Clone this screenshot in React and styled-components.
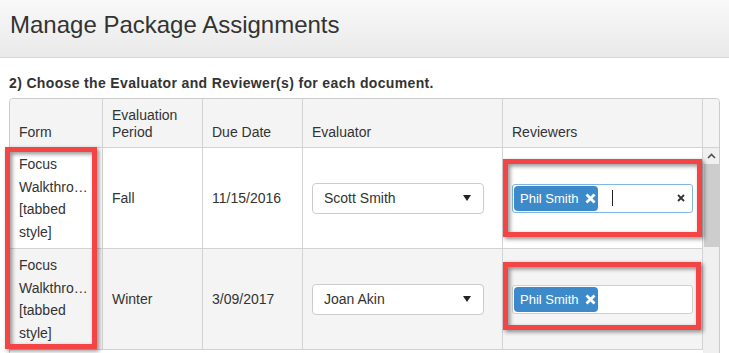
import React from 'react';
import styled, { createGlobalStyle } from 'styled-components';

const GlobalStyle = createGlobalStyle`
  * {
    box-sizing: border-box;
  }
  body {
    margin: 0;
    background: #fff;
    color: #333;
    font-family: "Liberation Sans", Arial, sans-serif;
    font-size: 14px;
  }
`;

const assignments = [
  {
    id: 'fall',
    formName: 'Focus\nWalkthro…\n[tabbed\nstyle]',
    period: 'Fall',
    dueDate: '11/15/2016',
    evaluator: 'Scott Smith',
    reviewers: ['Phil Smith'],
    focused: true,
  },
  {
    id: 'winter',
    formName: 'Focus\nWalkthro…\n[tabbed\nstyle]',
    period: 'Winter',
    dueDate: '3/09/2017',
    evaluator: 'Joan Akin',
    reviewers: ['Phil Smith'],
    focused: false,
  },
];

const CaretDown = () => (
  <svg width="8" height="6" viewBox="0 0 8 6">
    <path d="M0 0 H8 L4 6 Z" fill="#222" />
  </svg>
);

const TagRemove = () => (
  <svg width="11" height="11" viewBox="0 0 11 11">
    <path d="M1.5 1.5 L9.5 9.5 M9.5 1.5 L1.5 9.5" stroke="#fff" strokeWidth="2.8" />
  </svg>
);

const ClearAll = () => (
  <svg width="8" height="8" viewBox="0 0 8 8">
    <path d="M1 1 L7 7 M7 1 L1 7" stroke="#333" strokeWidth="1.8" />
  </svg>
);

const ChevronUp = () => (
  <svg width="9" height="6" viewBox="0 0 9 6">
    <path d="M1 5 L4.5 1.5 L8 5" fill="none" stroke="#505050" strokeWidth="1.6" />
  </svg>
);

function App () {
  return (
    <>
      <GlobalStyle />
      <PageHeader>
        <PageTitle>Manage Package Assignments</PageTitle>
      </PageHeader>
      <Content>
        <StepTitle>2) Choose the Evaluator and Reviewer(s) for each document.</StepTitle>
        <Table>
          <HeaderRow>
            <HeaderCell>Form</HeaderCell>
            <HeaderCell>Evaluation Period</HeaderCell>
            <HeaderCell>Due Date</HeaderCell>
            <HeaderCell>Evaluator</HeaderCell>
            <HeaderCell>Reviewers</HeaderCell>
            <HeaderCell $last />
          </HeaderRow>
          <Body>
            <Rows>
              {assignments.map((item, index) => (
                <Row key={item.id} $striped={index % 2 === 1}>
                  <Cell>
                    <FormName>{item.formName}</FormName>
                  </Cell>
                  <Cell>{item.period}</Cell>
                  <Cell>{item.dueDate}</Cell>
                  <Cell>
                    <Select>
                      <span>{item.evaluator}</span>
                      <CaretDown />
                    </Select>
                  </Cell>
                  <Cell>
                    <ReviewerBox $focused={item.focused}>
                      {item.reviewers.map((name) => (
                        <Tag key={name}>
                          {name}
                          <TagRemove />
                        </Tag>
                      ))}
                      {item.focused && (
                        <>
                          <Caret />
                          <ClearButton>
                            <ClearAll />
                          </ClearButton>
                        </>
                      )}
                    </ReviewerBox>
                  </Cell>
                </Row>
              ))}
            </Rows>
            <ScrollTrack>
              <ScrollArrow>
                <ChevronUp />
              </ScrollArrow>
              <ScrollThumb />
            </ScrollTrack>
          </Body>
          <Highlight $left={-5} $top={48} $width={92} $height={202} />
          <Highlight $left={493} $top={60} $width={199} $height={78} />
          <Highlight $left={493} $top={163} $width={198} $height={68} />
        </Table>
      </Content>
    </>
  );
}

const PageHeader = styled.div`
  height: 58px;
  padding: 13px 0 0 10px;
  background: linear-gradient(#f9f9f9, #e9e9e9);
  border-bottom: 1px solid #d6d6d6;
`;

const PageTitle = styled.h1`
  margin: 0;
  font-size: 24px;
  font-weight: 400;
  line-height: 24px;
  color: #333;
`;

const Content = styled.div`
  padding: 16px 0 0 9px;
`;

const StepTitle = styled.div`
  font-size: 14px;
  font-weight: 700;
  letter-spacing: 0.35px;
  line-height: 18px;
  color: #333;
  margin-bottom: 6px;
`;

const Table = styled.div`
  position: relative;
  width: 711px;
  border: 1px solid #ccc;
  border-radius: 4px;
`;

const HeaderRow = styled.div`
  display: grid;
  grid-template-columns: 93px 100px 100px 200px 200px 16px;
  height: 49px;
  background: #f4f4f4;
  border-bottom: 1px solid #d3d3d3;
  border-radius: 4px 4px 0 0;
`;

const HeaderCell = styled.div`
  display: flex;
  align-items: flex-end;
  padding: 0 9px 6px;
  line-height: 17px;
  color: #333;
  border-right: ${(props) => (props.$last ? 'none' : '1px solid #d3d3d3')};
`;

const Body = styled.div`
  display: flex;
  height: 230px;
  overflow: hidden;
`;

const Rows = styled.div`
  width: 693px;
`;

const Row = styled.div`
  display: grid;
  grid-template-columns: 93px 100px 100px 200px 200px;
  height: 101px;
  background: ${(props) => (props.$striped ? '#f4f4f4' : '#fff')};
  border-bottom: 1px solid #d3d3d3;
`;

const Cell = styled.div`
  display: flex;
  align-items: center;
  padding: 0 9px;
  border-right: 1px solid #d3d3d3;
  color: #333;
`;

const FormName = styled.div`
  white-space: pre-line;
  line-height: 22.5px;
`;

const Select = styled.div`
  display: flex;
  align-items: center;
  justify-content: space-between;
  width: 172px;
  height: 31px;
  padding: 0 12px 0 11px;
  background: #fff;
  border: 1px solid #ccc;
  border-radius: 4px;
  color: #333;
`;

const ReviewerBox = styled.div`
  display: flex;
  align-items: center;
  width: 181px;
  height: 29px;
  padding: 0 1px;
  background: #fff;
  border: 1px solid ${(props) => (props.$focused ? '#7fb6e4' : '#d0d0d0')};
  border-radius: 3px;
`;

const Tag = styled.span`
  display: inline-flex;
  align-items: center;
  gap: 6px;
  height: 25px;
  padding: 0 2px 0 6px;
  background: #3d8acb;
  border-radius: 4px;
  color: #fff;
  font-size: 13px;
`;

const Caret = styled.span`
  width: 1px;
  height: 16px;
  margin-left: 14px;
  background: #222;
`;

const ClearButton = styled.span`
  display: flex;
  margin-left: auto;
  margin-right: 6px;
`;

const ScrollTrack = styled.div`
  width: 16px;
  background: #f0f0f0;
`;

const ScrollArrow = styled.div`
  display: flex;
  align-items: center;
  justify-content: center;
  height: 16px;
  background: #f0f0f0;
`;

const ScrollThumb = styled.div`
  width: 15px;
  height: 83px;
  margin-left: 1px;
  background: #cdcdcd;
`;

const Highlight = styled.div`
  position: absolute;
  left: ${(props) => props.$left}px;
  top: ${(props) => props.$top}px;
  width: ${(props) => props.$width}px;
  height: ${(props) => props.$height}px;
  border: 5px solid #f34545;
  filter: drop-shadow(2px 2px 2px rgba(0, 0, 0, 0.45));
  pointer-events: none;
`;

export default App;
